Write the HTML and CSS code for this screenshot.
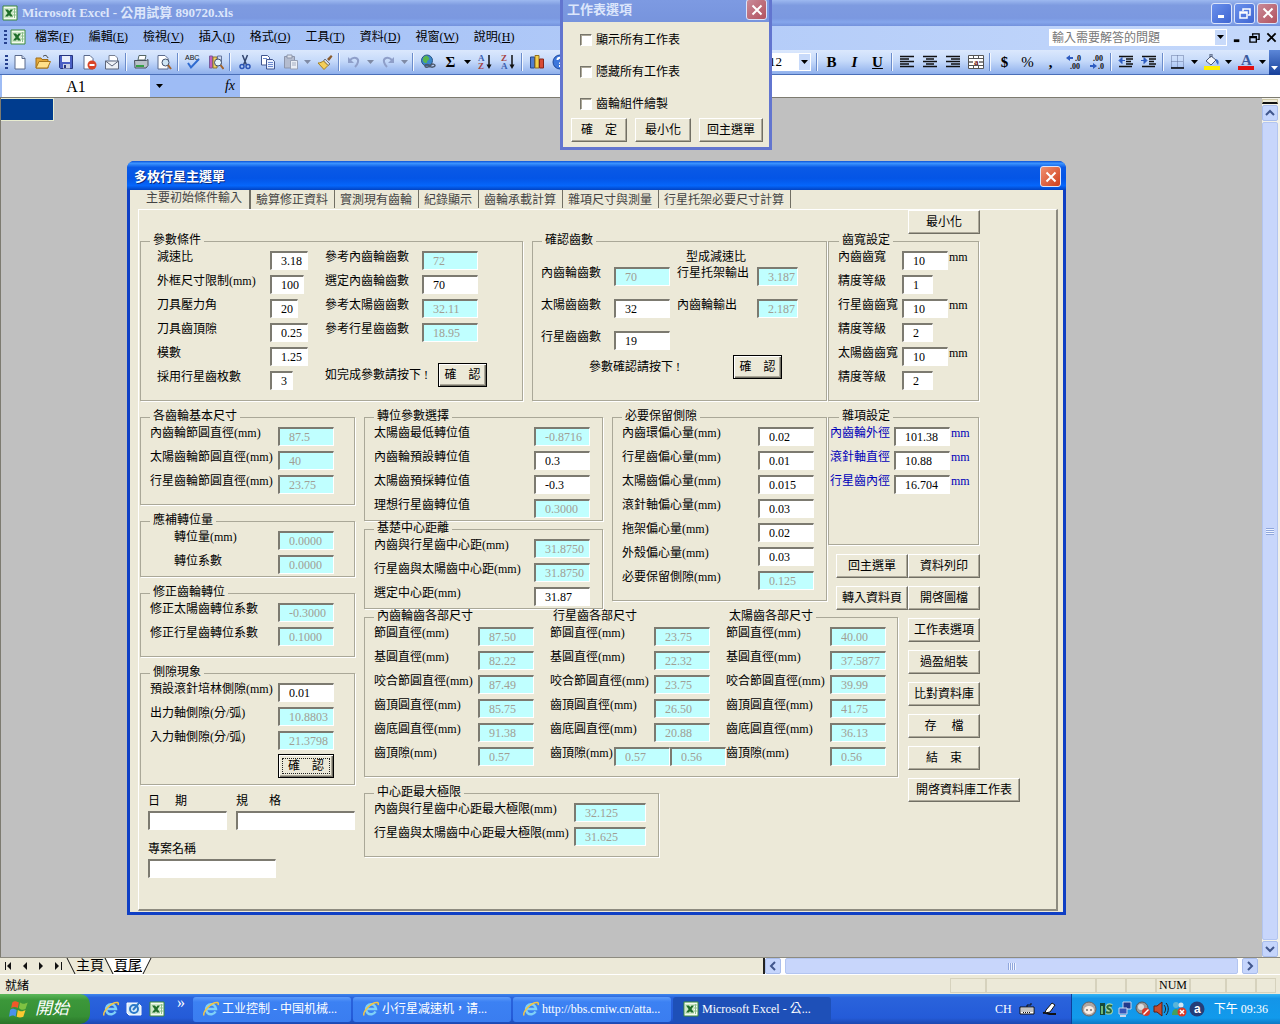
FILE: index.html
```html
<!DOCTYPE html>
<html lang="zh-Hant">
<head>
<meta charset="utf-8">
<title>Microsoft Excel - 公用試算 890720.xls</title>
<link rel="stylesheet" href="styles.css">
</head>
<body>
<svg class="defs" aria-hidden="true">
  <symbol id="dd" viewBox="0 0 7 4"><path d="M0 0h7L3.500 4z" fill="currentColor"/></symbol>
  <symbol id="excel" viewBox="0 0 16 16"><path d="M1 1h14v14H1z" fill="#f4fbf0" stroke="#3c8a3c"/><path d="M10 4h5M10 7h5M10 10h5M12.500 3v10" stroke="#8cc08c"/><path d="M2 3h9v10H2z" fill="#cfe8c8"/><path d="M3 4.500h3l5 7H8zM8.500 4.500H11l-5 7H3z" fill="#1f6e2a"/></symbol>
  <symbol id="page" viewBox="0 0 16 16"><path d="M3 1.500h7l3 3V15H3z" fill="#fff" stroke="#5b6a8c"/><path d="M10 1.500v3h3" fill="#cdd9ee" stroke="#5b6a8c"/></symbol>
  <symbol id="open" viewBox="0 0 16 16"><path d="M1 4h5l1 1.500h6V14H1z" fill="#e5a93a" stroke="#a06c14"/><path d="M1 14l3-6.500h11.500L12.500 14z" fill="#ffe08a" stroke="#a8761c"/><path d="M8 2.500c2-2 4-1 5 1.500" fill="none" stroke="#333"/></symbol>
  <symbol id="save" viewBox="0 0 16 16"><path d="M1.500 1.500h13v13h-12l-1-1z" fill="#4a5fc4" stroke="#26357f"/><path d="M4 2h8v6H4z" fill="#e8eefb"/><path d="M5 10h7v4.500H5z" fill="#c8d0e4"/><path d="M6 11h2v3H6z" fill="#26357f"/></symbol>
  <symbol id="perm" viewBox="0 0 16 16"><path d="M3 1.500h6l3 3V15H3z" fill="#fff" stroke="#5b6a8c"/><circle cx="11" cy="11" r="4.500" fill="#d84428"/><path d="M8.500 11h5" stroke="#fff" stroke-width="2"/></symbol>
  <symbol id="mail" viewBox="0 0 16 16"><path d="M5 6V1.500h6l2.500 2.500v3" fill="#fff" stroke="#777f92"/><path d="M1.500 7h13v8h-13z" fill="#eef1f7" stroke="#5d667c"/><path d="M1.500 7l6.500 5 6.500-5" fill="none" stroke="#5d667c"/></symbol>
  <symbol id="print" viewBox="0 0 16 16"><path d="M5 6l1-4.500h7L12 6z" fill="#fff" stroke="#566"/><path d="M1.500 6.500h12l1.500-1v6l-2 2.500h-11z" fill="#b9c1c9" stroke="#49525e"/><path d="M3 11h8v2H3z" fill="#35a045"/></symbol>
  <symbol id="preview" viewBox="0 0 16 16"><path d="M2 1.500h7l3 3V15H2z" fill="#fff" stroke="#5b6a8c"/><circle cx="9.500" cy="8.500" r="3.500" fill="#cfe6f5" stroke="#41506c"/><path d="M12 11l3 4" stroke="#a3632a" stroke-width="2"/></symbol>
  <symbol id="research" viewBox="0 0 16 16"><path d="M1.500 2h3v12h-3z" fill="#c25fbb" stroke="#7a5b9c"/><path d="M5 3h4v11H5z" fill="#f0cf62" stroke="#8d7630"/><path d="M9.500 2h4v8h-4z" fill="#cdd9ee" stroke="#64759e"/><circle cx="10" cy="8.500" r="3.500" fill="#e2f2fa" stroke="#41506c"/><path d="M12.500 11l3 4" stroke="#a3632a" stroke-width="2"/></symbol>
  <symbol id="cut" viewBox="0 0 16 16"><path d="M5.500 1l4 10M10.500 1l-4 10" stroke="#32456e" stroke-width="1.500"/><circle cx="5" cy="12.500" r="2" fill="none" stroke="#2c55b5" stroke-width="1.500"/><circle cx="11" cy="12.500" r="2" fill="none" stroke="#2c55b5" stroke-width="1.500"/></symbol>
  <symbol id="copy" viewBox="0 0 16 16"><path d="M1.500 1.500h6l2 2V11h-8z" fill="#fff" stroke="#41568f"/><path d="M6.500 5.500h6l2 2V15h-8z" fill="#e8f0ff" stroke="#41568f"/><path d="M8 8.500h5M8 10.500h5M8 12.500h5M3 4.500h4" stroke="#6c8ad0"/></symbol>
  <symbol id="paste" viewBox="0 0 16 16"><path d="M1.500 2.500h10V14h-10z" fill="#b4bccf" stroke="#8c95ab"/><path d="M4 1h5v3H4z" fill="#dfe4ee" stroke="#8c95ab"/><path d="M7.500 6.500h7V15h-7z" fill="#e9edf5" stroke="#97a0b5"/><path d="M9 9h4M9 11h4" stroke="#a5aec2"/></symbol>
  <symbol id="painter" viewBox="0 0 16 16"><path d="M10 5l4-4 1.500 1.500L12 7z" fill="#8a5b2c"/><path d="M8 5l5 5-2 1.500L6.500 7z" fill="#d5dae4" stroke="#6a7183"/><path d="M6.500 7l4.500 4.500L7 15.500 1 9c2 0 4-1 5.500-2z" fill="#f3cf5a" stroke="#a58120"/></symbol>
  <symbol id="undo" viewBox="0 0 16 16"><path d="M4 6c4-4 9-2 8 2-.500 2-2 4-3 5" fill="none" stroke="#8f9fc9" stroke-width="2"/><path d="M2 3v6h6z" fill="#8f9fc9"/></symbol>
  <symbol id="redo" viewBox="0 0 16 16"><path d="M12 6C8 2 3 4 4 8c.500 2 2 4 3 5" fill="none" stroke="#8f9fc9" stroke-width="2"/><path d="M14 3v6H8z" fill="#8f9fc9"/></symbol>
  <symbol id="globe" viewBox="0 0 16 16"><circle cx="7" cy="6.500" r="5.500" fill="#3b86c9" stroke="#2b5688"/><path d="M3 4c3-4 5-2 6 0s-2 2-2 4-3 1-4-1z" fill="#59b64e"/><path d="M5 12c0-2 4-2 5 0s5 1 5-.500-3-2-4-.500-6 4-6 .500z" fill="none" stroke="#4c596e" stroke-width="1.500"/></symbol>
  <symbol id="chart" viewBox="0 0 16 16"><path d="M1.500 3h4v11h-4z" fill="#4f7cd0" stroke="#24468c"/><path d="M6 1.500h4V14H6z" fill="#f4cf4b" stroke="#94701c"/><path d="M10.500 5h4v9h-4z" fill="#d84a34" stroke="#86261a"/></symbol>
  <symbol id="help" viewBox="0 0 16 16"><circle cx="8" cy="8" r="7" fill="#3d77dc" stroke="#1d489c"/><path d="M5.500 6c0-3 5-3 5 0 0 2-2.500 1.500-2.500 4M8 11v2" fill="none" stroke="#fff" stroke-width="2"/></symbol>
  <symbol id="al" viewBox="0 0 16 16"><path d="M1 2.500h14M1 5h9M1 7.500h14M1 10h9M1 12.500h14" stroke="#111" stroke-width="1.500"/></symbol>
  <symbol id="ac" viewBox="0 0 16 16"><path d="M1 2.500h14M4 5h8M1 7.500h14M4 10h8M1 12.500h14" stroke="#111" stroke-width="1.500"/></symbol>
  <symbol id="ar" viewBox="0 0 16 16"><path d="M1 2.500h14M6 5h9M1 7.500h14M6 10h9M1 12.500h14" stroke="#111" stroke-width="1.500"/></symbol>
  <symbol id="outd" viewBox="0 0 16 16"><path d="M1 2.500h14M8 5h7M8 7.500h5M8 10h7M1 12.500h13" stroke="#111" stroke-width="1.500"/><path d="M7 6.500H4M4 3.500v6L1 6.500z" fill="#2d5bc0" stroke="#2d5bc0"/></symbol>
  <symbol id="ind" viewBox="0 0 16 16"><path d="M1 2.500h14M8 5h7M8 7.500h5M8 10h7M1 12.500h13" stroke="#111" stroke-width="1.500"/><path d="M0 6.500h3M3 3.500v6l3-3z" fill="#2d5bc0" stroke="#2d5bc0"/></symbol>
  <symbol id="border" viewBox="0 0 16 16"><path d="M1.500 1.500h12v12h-12zM7.500 1.500v12M1.500 7.500h12" fill="none" stroke="#64759e" stroke-dasharray="1 1"/><path d="M1 14h13" stroke="#000" stroke-width="1.500"/></symbol>
  <symbol id="fill" viewBox="0 0 16 16"><path d="M2 7l5-5 5 4-5 5z" fill="#f3f6fb" stroke="#4c5a78"/><path d="M6 4V0h2v3" fill="none" stroke="#4c5a78"/><path d="M12 5c3 1 3 3 2 6l-2-3z" fill="#3d6cc4"/><path d="M0 12h16v4H0z" fill="#ffef00"/></symbol>
  <symbol id="x" viewBox="0 0 12 12"><path d="M1.500 1.500l9 9M10.500 1.500l-9 9" stroke="currentColor" stroke-width="2"/></symbol>
  <symbol id="min" viewBox="0 0 12 12"><path d="M2 8h6v3H2z" fill="currentColor"/></symbol>
  <symbol id="rest" viewBox="0 0 12 12"><path d="M4 4V2h7v6H9" fill="none" stroke="currentColor" stroke-width="1.500"/><path d="M1 5h7v6H1zM1 6h7" fill="none" stroke="currentColor" stroke-width="1.500"/></symbol>
  <symbol id="up" viewBox="0 0 10 10"><path d="M1 7l4-4 4 4" fill="none" stroke="#40568c" stroke-width="2"/></symbol>
  <symbol id="down" viewBox="0 0 10 10"><path d="M1 3l4 4 4-4" fill="none" stroke="#40568c" stroke-width="2"/></symbol>
  <symbol id="left" viewBox="0 0 10 10"><path d="M7 1L3 5l4 4" fill="none" stroke="#40568c" stroke-width="2"/></symbol>
  <symbol id="right" viewBox="0 0 10 10"><path d="M3 1l4 4-4 4" fill="none" stroke="#40568c" stroke-width="2"/></symbol>
  <symbol id="ie" viewBox="0 0 16 16"><path d="M12.500 10.500A5 5 0 1 1 13 8H4" fill="none" stroke="#7fd0f8" stroke-width="2.500"/><path d="M1 14.500C-.500 11 8 1 14.500 1.500c1 .500 1 1.500.500 2.500" fill="none" stroke="#f5c542" stroke-width="1.500"/></symbol>
  <symbol id="desk" viewBox="0 0 16 16"><path d="M1 2h11l3 3v9H3L1 12z" fill="#d8ecfa" stroke="#fff"/><circle cx="8" cy="8" r="4" fill="none" stroke="#2b78c8" stroke-width="2"/><path d="M7 9l6-7" stroke="#2b78c8" stroke-width="2"/></symbol>
  <symbol id="flag" viewBox="0 0 20 18"><path d="M3 3c2-2 4-1 6 0L8 8C6 7 4 7 2 8z" fill="#f0582a"/><path d="M10 3c3 2 5 1 7 0l-2 6c-2 1-4 1-6-1z" fill="#7fc242"/><path d="M1 10c2-2 4-1 6 0l-1 6c-2-2-4-1-6 0z" fill="#4a92ec"/><path d="M8 10c3 2 5 1 7 0l-2 6c-2 1-4 1-6 0z" fill="#fbc932"/></symbol>
</svg>

<div class="desktop">
  <header class="titlebar">
    <svg class="ico"><use href="#excel"/></svg>
    <h1>Microsoft Excel - 公用試算 890720.xls</h1>
    <div class="caption-buttons">
      <button class="cap" aria-label="最小化"><svg><use href="#min"/></svg></button>
      <button class="cap" aria-label="還原"><svg><use href="#rest"/></svg></button>
      <button class="cap cap-close" aria-label="關閉"><svg><use href="#x"/></svg></button>
    </div>
  </header>

  <nav class="menubar">
    <span class="grip"></span>
    <svg class="ico"><use href="#excel"/></svg>
    <button>檔案(<u>F</u>)</button><button>編輯(<u>E</u>)</button><button>檢視(<u>V</u>)</button><button>插入(<u>I</u>)</button><button>格式(<u>O</u>)</button><button>工具(<u>T</u>)</button><button>資料(<u>D</u>)</button><button>視窗(<u>W</u>)</button><button>說明(<u>H</u>)</button>
    <div class="ask">
      <input type="text" aria-label="輸入需要解答的問題" value="輸入需要解答的問題">
      <span class="drop"><svg><use href="#dd"/></svg></span>
    </div>
    <div class="doc-buttons">
      <button aria-label="最小化視窗"><svg><use href="#min"/></svg></button>
      <button aria-label="還原視窗"><svg><use href="#rest"/></svg></button>
      <button aria-label="關閉視窗"><svg><use href="#x"/></svg></button>
    </div>
  </nav>

  <div class="toolbar">
    <span class="grip"></span>
    <button aria-label="開新檔案"><svg><use href="#page"/></svg></button>
    <button aria-label="開啟"><svg><use href="#open"/></svg></button>
    <button aria-label="儲存"><svg><use href="#save"/></svg></button>
    <button aria-label="權限"><svg><use href="#perm"/></svg></button>
    <button aria-label="郵件"><svg><use href="#mail"/></svg></button>
    <i class="sep"></i>
    <button aria-label="列印"><svg><use href="#print"/></svg></button>
    <button aria-label="預覽列印"><svg><use href="#preview"/></svg></button>
    <i class="sep"></i>
    <button aria-label="拼字檢查"><svg viewBox="0 0 16 16"><text x="0" y="6" font-size="7" font-family="Liberation Sans" fill="#111">ABC</text><path d="M3 9l3 4.500L14 5" fill="none" stroke="#2f6bd0" stroke-width="2"/></svg></button>
    <button aria-label="參考資料"><svg><use href="#research"/></svg></button>
    <i class="sep"></i>
    <button aria-label="剪下"><svg><use href="#cut"/></svg></button>
    <button aria-label="複製"><svg><use href="#copy"/></svg></button>
    <button aria-label="貼上"><svg><use href="#paste"/></svg></button>
    <button class="arrow dim" aria-label="貼上選項"><svg><use href="#dd"/></svg></button>
    <button aria-label="複製格式"><svg><use href="#painter"/></svg></button>
    <i class="sep"></i>
    <button aria-label="復原"><svg><use href="#undo"/></svg></button>
    <button class="arrow dim" aria-label="復原清單"><svg><use href="#dd"/></svg></button>
    <button aria-label="取消復原"><svg><use href="#redo"/></svg></button>
    <button class="arrow dim" aria-label="取消復原清單"><svg><use href="#dd"/></svg></button>
    <i class="sep"></i>
    <button aria-label="超連結"><svg><use href="#globe"/></svg></button>
    <button class="glyph">Σ</button>
    <button class="arrow" aria-label="加總選項"><svg><use href="#dd"/></svg></button>
    <button aria-label="遞增排序"><svg viewBox="0 0 16 16"><text x="1" y="7" font-size="9" font-weight="bold" font-family="Liberation Serif" fill="#3b5fae">A</text><text x="1" y="15" font-size="9" font-weight="bold" font-family="Liberation Serif" fill="#a54242">Z</text><path d="M12 1v11" stroke="#111" stroke-width="1.500"/><path d="M9.500 10.500h5L12 15z" fill="#111"/></svg></button>
    <button aria-label="遞減排序"><svg viewBox="0 0 16 16"><text x="1" y="7" font-size="9" font-weight="bold" font-family="Liberation Serif" fill="#a54242">Z</text><text x="1" y="15" font-size="9" font-weight="bold" font-family="Liberation Serif" fill="#3b5fae">A</text><path d="M12 1v11" stroke="#111" stroke-width="1.500"/><path d="M9.500 10.500h5L12 15z" fill="#111"/></svg></button>
    <i class="sep"></i>
    <button aria-label="圖表精靈"><svg><use href="#chart"/></svg></button>
    <button aria-label="說明"><svg><use href="#help"/></svg></button>

    <div class="size">
      <select aria-label="字型大小"><option>12</option></select>
      <span class="drop"><svg><use href="#dd"/></svg></span>
    </div>
    <i class="sep"></i>
    <button class="glyph">B</button>
    <button class="glyph italic">I</button>
    <button class="glyph under">U</button>
    <i class="sep"></i>
    <button aria-label="靠左"><svg><use href="#al"/></svg></button>
    <button aria-label="置中"><svg><use href="#ac"/></svg></button>
    <button aria-label="靠右"><svg><use href="#ar"/></svg></button>
    <button aria-label="跨欄置中"><svg viewBox="0 0 16 16"><path d="M.500 1.500h15v13H.500zM5.500 1.500v3M10.500 1.500v3M5.500 11.500v3M10.500 11.500v3M.500 4.500h15M.500 11.500h15" fill="#fff" stroke="#555"/><text x="6" y="10.500" font-size="9" font-weight="bold" font-family="Liberation Serif" fill="#701818">a</text><path d="M1 8h4M11 8h4" stroke="#111"/></svg></button>
    <i class="sep"></i>
    <button class="glyph">$</button>
    <button class="glyph light">%</button>
    <button class="glyph">,</button>
    <button aria-label="增加小數位數"><svg viewBox="0 0 16 16"><text x="9" y="7" font-size="8" font-weight="bold" font-family="Liberation Serif" fill="#111">.0</text><text x="4" y="15" font-size="8" font-weight="bold" font-family="Liberation Serif" fill="#111">.00</text><path d="M7 4H2" stroke="#2d5bc0" stroke-width="2"/><path d="M4 1v6L0 4z" fill="#2d5bc0"/></svg></button>
    <button aria-label="減少小數位數"><svg viewBox="0 0 16 16"><text x="4" y="7" font-size="8" font-weight="bold" font-family="Liberation Serif" fill="#111">.00</text><text x="9" y="15" font-size="8" font-weight="bold" font-family="Liberation Serif" fill="#111">.0</text><path d="M1 12h4" stroke="#2d5bc0" stroke-width="2"/><path d="M4 9v6l4-3z" fill="#2d5bc0"/></svg></button>
    <i class="sep"></i>
    <button aria-label="減少縮排"><svg><use href="#outd"/></svg></button>
    <button aria-label="增加縮排"><svg><use href="#ind"/></svg></button>
    <i class="sep"></i>
    <button aria-label="框線"><svg><use href="#border"/></svg></button>
    <button class="arrow" aria-label="框線選項"><svg><use href="#dd"/></svg></button>
    <button aria-label="填滿色彩"><svg><use href="#fill"/></svg></button>
    <button class="arrow" aria-label="填滿選項"><svg><use href="#dd"/></svg></button>
    <button aria-label="字型色彩"><svg viewBox="0 0 16 16"><text x="3" y="11" font-size="15" font-weight="bold" font-family="Liberation Serif" fill="#3b5a9c">A</text><path d="M0 12h16v4H0z" fill="#e01010"/></svg></button>
    <button class="arrow" aria-label="字型色彩選項"><svg><use href="#dd"/></svg></button>
    <button class="endcap" aria-label="工具列選項"><svg><use href="#dd"/></svg></button>
  </div>

  <div class="formula">
    <input class="namebox" type="text" aria-label="名稱方塊" value="A1">
    <button class="name-arrow" aria-label="名稱清單"><svg><use href="#dd"/></svg></button>
    <button class="fx">fx</button>
    <input class="fbox" type="text" aria-label="資料編輯列">
  </div>

  <main class="workspace">
    <div class="cell"></div>
    <div class="vscroll">
      <i class="split"></i>
      <button aria-label="向上捲動"><svg><use href="#up"/></svg></button>
      <div class="thumb"><i></i></div>
      <button aria-label="向下捲動"><svg><use href="#down"/></svg></button>
    </div>
  </main>

  <div class="sheets">
    <svg class="navs" viewBox="0 0 66 16"><path d="M5.500 4v8M61.500 4v8" stroke="#111"/><path d="M11 4v8L7 8zM27 4v8l-4-4zM39 4v8l4-4zM55 4v8l4-4z" fill="#111"/></svg>
    <svg class="slash" viewBox="0 0 10 16"><path d="M1 0l8 16" stroke="#111"/></svg>
    <a href="#">主頁</a>
    <svg class="slash on" viewBox="0 0 10 16"><path d="M2 0h8v16z" fill="#fff"/><path d="M1 0l8 16" stroke="#111"/></svg>
    <a href="#" class="current">頁尾</a>
    <svg class="slash" viewBox="0 0 10 16"><path d="M0 0h9L1 16H0z" fill="#fff"/><path d="M9 0L1 16" stroke="#111"/></svg>
    <div class="hscroll">
      <button aria-label="向左捲動"><svg><use href="#left"/></svg></button>
      <div class="thumb"><i></i></div>
      <button aria-label="向右捲動"><svg><use href="#right"/></svg></button>
    </div>
  </div>

  <div class="status">
    <span class="ready">就緒</span>
    <span class="st w36"></span><span class="st w110"></span><span class="st w30"></span><span class="st w30"></span><span class="st num">NUM</span><span class="st w36"></span><span class="st w30"></span><span class="st w20"></span>
  </div>

  <footer class="taskbar">
    <button class="start"><svg><use href="#flag"/></svg>開始</button>
    <div class="quick">
      <svg><use href="#ie"/></svg><svg><use href="#desk"/></svg><svg><use href="#excel"/></svg><span>»</span>
    </div>
    <button class="task"><svg><use href="#ie"/></svg><span>工业控制 - 中国机械...</span></button>
    <button class="task"><svg><use href="#ie"/></svg><span>小行星减速机，请...</span></button>
    <button class="task"><svg><use href="#ie"/></svg><span>http://bbs.cmiw.cn/atta...</span></button>
    <button class="task active"><svg><use href="#excel"/></svg><span>Microsoft Excel - 公...</span></button>
    <div class="lang">
      <span>CH</span>
      <svg viewBox="0 0 16 16"><path d="M1 6h14v7H1z" fill="#fff" stroke="#111"/><path d="M2.500 8h11M2.500 10h11M4 11.500h8" stroke="#111" stroke-dasharray="1 1"/><path d="M8 6V4h4V2" fill="none" stroke="#111"/></svg>
      <svg viewBox="0 0 16 16"><path d="M1 12c4-1 4 1 7 1h6" fill="none" stroke="#111" stroke-width="2"/><path d="M4 9l6-7 3 2-5 7-5 1z" fill="#fff" stroke="#111"/></svg>
    </div>
    <div class="tray">
      <svg viewBox="0 0 16 16"><circle cx="8" cy="8" r="7" fill="#b0a8a4" stroke="#6b6260"/><ellipse cx="8" cy="9" rx="5" ry="4" fill="#fbeee6"/><path d="M5 9h2M9 9h2" stroke="#333"/></svg>
      <svg viewBox="0 0 16 16"><path d="M1 2h5v12H1z" fill="#174a3a"/><path d="M3 5v8" stroke="#8ee08a" stroke-width="1.500"/><path d="M13 5c-5-2-6 2-3 3s3 5-3 3" fill="none" stroke="#a9d8a4" stroke-width="4"/><path d="M13 5c-5-2-6 2-3 3s3 5-3 3" fill="none" stroke="#2c6a3c" stroke-width="2"/></svg>
      <svg viewBox="0 0 16 16"><path d="M6 1h8v7H6z" fill="#203a8c" stroke="#c9d6ec"/><path d="M2 7h8v6H2z" fill="#3456b8" stroke="#c9d6ec"/><path d="M3 15h6" stroke="#c9d6ec" stroke-width="2"/></svg>
      <svg viewBox="0 0 16 16"><circle cx="7" cy="7" r="6" fill="#9a9a9a" stroke="#555"/><circle cx="6" cy="6" r="3" fill="#ddd"/><circle cx="11" cy="11" r="4" fill="#d83a2a"/><path d="M8.500 13.500l5-5" stroke="#fff" stroke-width="1.500"/></svg>
      <svg viewBox="0 0 16 16"><path d="M1 5h3l5-4v14l-5-4H1z" fill="#c64c30" stroke="#5e1e12"/><path d="M11 4c2 2 2 6 0 8M13 2c3 3 3 9 0 12" fill="none" stroke="#222"/></svg>
      <svg viewBox="0 0 16 16"><circle cx="5" cy="4" r="3" fill="#5bb5d8"/><path d="M1 14c0-8 8-8 8 0z" fill="#43a05b"/><circle cx="10" cy="4" r="2.500" fill="#cfe6f4"/><circle cx="11" cy="11" r="4.500" fill="#d83a2a"/><path d="M9 9l4 4M13 9l-4 4" stroke="#fff" stroke-width="1.500"/></svg>
      <svg viewBox="0 0 16 16"><circle cx="8" cy="8" r="7.500" fill="#243e78"/><text x="5" y="12" font-size="12" font-weight="bold" font-family="Liberation Sans" fill="#fff">a</text></svg>
      <span>下午 09:36</span>
    </div>
  </footer>

  <section class="window options" aria-label="工作表選項">
    <div class="win-title"><h2>工作表選項</h2><button class="cap cap-close" aria-label="關閉"><svg><use href="#x"/></svg></button></div>
    <form class="options-body">
      <label><input type="checkbox">顯示所有工作表</label>
      <label><input type="checkbox">隱藏所有工作表</label>
      <label><input type="checkbox">齒輪組件繪製</label>
      <div class="options-actions">
        <button type="button" class="btn">確　定</button><button type="button" class="btn">最小化</button><button type="button" class="btn">回主選單</button>
      </div>
    </form>
  </section>

  <section class="window planet" aria-label="多枚行星主選單">
    <div class="win-title"><h2>多枚行星主選單</h2><button class="cap cap-close" aria-label="關閉"><svg><use href="#x"/></svg></button></div>
    <div class="planet-body">
      <div class="tabs" role="tablist">
        <button role="tab" aria-selected="true">主要初始條件輸入</button><button role="tab">驗算修正資料</button><button role="tab">實測現有齒輪</button><button role="tab">紀錄顯示</button><button role="tab">齒輪承載計算</button><button role="tab">雜項尺寸與測量</button><button role="tab">行星托架必要尺寸計算</button>
      </div>
      <form class="panel">
        <div class="sheet">
          <button type="button" class="btn w72 minimize">最小化</button>

          <div class="top">
            <fieldset class="params">
              <legend>參數條件</legend>
              <div class="fields l113">
                <label><span>減速比</span><input class="i37" type="text" value="3.18"></label>
                <label><span>外框尺寸限制(mm)</span><input class="i34" type="text" value="100"></label>
                <label><span>刀具壓力角</span><input class="i28" type="text" value="20"></label>
                <label><span>刀具齒頂隙</span><input class="i37" type="text" value="0.25"></label>
                <label><span>模數</span><input class="i37" type="text" value="1.25"></label>
                <label><span>採用行星齒枚數</span><input class="i22" type="text" value="3"></label>
              </div>
              <div class="fields l97">
                <label><span>參考內齒輪齒數</span><input type="text" value="72" disabled></label>
                <label><span>選定內齒輪齒數</span><input type="text" value="70"></label>
                <label><span>參考太陽齒齒數</span><input type="text" value="32.11" disabled></label>
                <label><span>參考行星齒齒數</span><input type="text" value="18.95" disabled></label>
                <div class="confirm"><span>如完成參數請按下 !</span><button type="button" class="btn default">確　認</button></div>
              </div>
            </fieldset>

            <fieldset class="teeth">
              <legend>確認齒數</legend>
              <div class="teeth-cols">
                <div class="fields tall l73">
                  <label><span>內齒輪齒數</span><input type="text" value="70" disabled></label>
                  <label><span>太陽齒齒數</span><input type="text" value="32"></label>
                  <label><span>行星齒齒數</span><input type="text" value="19"></label>
                </div>
                <div class="ratio">
                  <span class="ratio-head">型成減速比</span>
                  <div class="fields tall l80">
                    <label><span>行星托架輸出</span><input class="i40" type="text" value="3.187" disabled></label>
                    <label><span>內齒輪輸出</span><input class="i40" type="text" value="2.187" disabled></label>
                  </div>
                </div>
              </div>
              <div class="confirm teeth-confirm"><span>參數確認請按下 !</span><button type="button" class="btn default">確　認</button></div>
            </fieldset>

            <fieldset class="width-set">
              <legend>齒寬設定</legend>
              <div class="fields l64">
                <label><span>內齒齒寬</span><input class="i46" type="text" value="10"><em>mm</em></label>
                <label><span>精度等級</span><input class="i31" type="text" value="1"></label>
                <label><span>行星齒齒寬</span><input class="i46" type="text" value="10"><em>mm</em></label>
                <label><span>精度等級</span><input class="i31" type="text" value="2"></label>
                <label><span>太陽齒齒寬</span><input class="i46" type="text" value="10"><em>mm</em></label>
                <label><span>精度等級</span><input class="i31" type="text" value="2"></label>
              </div>
            </fieldset>
          </div>

          <div class="lower">
            <div class="left">
              <fieldset>
                <legend>各齒輪基本尺寸</legend>
                <div class="fields l128">
                  <label><span>內齒輪節圓直徑(mm)</span><input type="text" value="87.5" disabled></label>
                  <label><span>太陽齒輪節圓直徑(mm)</span><input type="text" value="40" disabled></label>
                  <label><span>行星齒輪節圓直徑(mm)</span><input type="text" value="23.75" disabled></label>
                </div>
              </fieldset>
              <fieldset class="snug">
                <legend>應補轉位量</legend>
                <div class="fields l128 indent">
                  <label><span>轉位量(mm)</span><input type="text" value="0.0000" disabled></label>
                  <label><span>轉位系數</span><input type="text" value="0.0000" disabled></label>
                </div>
              </fieldset>
              <fieldset>
                <legend>修正齒輪轉位</legend>
                <div class="fields l128">
                  <label><span>修正太陽齒轉位系數</span><input type="text" value="-0.3000" disabled></label>
                  <label><span>修正行星齒轉位系數</span><input type="text" value="0.1000" disabled></label>
                </div>
              </fieldset>
              <fieldset class="play">
                <legend>側隙現象</legend>
                <div class="fields l128">
                  <label><span>預設滾針培林側隙(mm)</span><input type="text" value="0.01"></label>
                  <label><span>出力軸側隙(分/弧)</span><input type="text" value="10.8803" disabled></label>
                  <label><span>入力軸側隙(分/弧)</span><input type="text" value="21.3798" disabled></label>
                </div>
                <button type="button" class="btn default focused">確　認</button>
              </fieldset>
              <div class="notes">
                <label class="date"><span>日     期</span><input type="text"></label>
                <label class="spec"><span>規       格</span><input type="text"></label>
                <label class="project"><span>專案名稱</span><input type="text"></label>
              </div>
            </div>

            <div class="right">
              <div class="mid">
                <div class="shift">
                  <fieldset class="snug">
                    <legend>轉位參數選擇</legend>
                    <div class="fields l160">
                      <label><span>太陽齒最低轉位值</span><input type="text" value="-0.8716" disabled></label>
                      <label><span>內齒輪預設轉位值</span><input type="text" value="0.3"></label>
                      <label><span>太陽齒預採轉位值</span><input type="text" value="-0.3"></label>
                      <label><span>理想行星齒轉位值</span><input type="text" value="0.3000" disabled></label>
                    </div>
                  </fieldset>
                  <fieldset class="snug">
                    <legend>基楚中心距離</legend>
                    <div class="fields l160">
                      <label><span>內齒與行星齒中心距(mm)</span><input type="text" value="31.8750" disabled></label>
                      <label><span>行星齒與太陽齒中心距(mm)</span><input type="text" value="31.8750" disabled></label>
                      <label><span>選定中心距(mm)</span><input type="text" value="31.87"></label>
                    </div>
                  </fieldset>
                </div>
                <fieldset class="keep">
                  <legend>必要保留側隙</legend>
                  <div class="fields l136">
                    <label><span>內齒環偏心量(mm)</span><input type="text" value="0.02"></label>
                    <label><span>行星齒偏心量(mm)</span><input type="text" value="0.01"></label>
                    <label><span>太陽齒偏心量(mm)</span><input type="text" value="0.015"></label>
                    <label><span>滾針軸偏心量(mm)</span><input type="text" value="0.03"></label>
                    <label><span>拖架偏心量(mm)</span><input type="text" value="0.02"></label>
                    <label><span>外殼偏心量(mm)</span><input type="text" value="0.03"></label>
                    <label><span>必要保留側隙(mm)</span><input type="text" value="0.125" disabled></label>
                  </div>
                </fieldset>
                <div class="misc-col">
                  <fieldset class="misc">
                    <legend>雜項設定</legend>
                    <div class="fields l64">
                      <label><span>內齒輪外徑</span><input type="text" value="101.38"><em>mm</em></label>
                      <label><span>滾針軸直徑</span><input type="text" value="10.88"><em>mm</em></label>
                      <label><span>行星齒內徑</span><input type="text" value="16.704"><em>mm</em></label>
                    </div>
                  </fieldset>
                  <div class="pairs">
                    <button type="button" class="btn">回主選單</button><button type="button" class="btn">資料列印</button>
                    <button type="button" class="btn">轉入資料頁</button><button type="button" class="btn">開啓圖檔</button>
                  </div>
                </div>
              </div>

              <div class="bottom">
                <div class="dims">
                  <fieldset>
                    <legend class="triple"><span>內齒輪齒各部尺寸</span><span>行星齒各部尺寸</span><span>太陽齒各部尺寸</span></legend>
                    <div class="dim-cols">
                      <div class="fields l104">
                        <label><span>節圓直徑(mm)</span><input type="text" value="87.50" disabled></label>
                        <label><span>基圓直徑(mm)</span><input type="text" value="82.22" disabled></label>
                        <label><span>咬合節圓直徑(mm)</span><input type="text" value="87.49" disabled></label>
                        <label><span>齒頂圓直徑(mm)</span><input type="text" value="85.75" disabled></label>
                        <label><span>齒底圓直徑(mm)</span><input type="text" value="91.38" disabled></label>
                        <label><span>齒頂隙(mm)</span><input type="text" value="0.57" disabled></label>
                      </div>
                      <div class="fields l104">
                        <label><span>節圓直徑(mm)</span><input type="text" value="23.75" disabled></label>
                        <label><span>基圓直徑(mm)</span><input type="text" value="22.32" disabled></label>
                        <label><span>咬合節圓直徑(mm)</span><input type="text" value="23.75" disabled></label>
                        <label><span>齒頂圓直徑(mm)</span><input type="text" value="26.50" disabled></label>
                        <label><span>齒底圓直徑(mm)</span><input type="text" value="20.88" disabled></label>
                        <div class="two"><label for="gap-a">齒頂隙(mm)</label><input id="gap-a" type="text" value="0.57" disabled><input type="text" aria-label="齒頂隙二" value="0.56" disabled></div>
                      </div>
                      <div class="fields l104">
                        <label><span>節圓直徑(mm)</span><input type="text" value="40.00" disabled></label>
                        <label><span>基圓直徑(mm)</span><input type="text" value="37.5877" disabled></label>
                        <label><span>咬合節圓直徑(mm)</span><input type="text" value="39.99" disabled></label>
                        <label><span>齒頂圓直徑(mm)</span><input type="text" value="41.75" disabled></label>
                        <label><span>齒底圓直徑(mm)</span><input type="text" value="36.13" disabled></label>
                        <label><span>齒頂隙(mm)</span><input type="text" value="0.56" disabled></label>
                      </div>
                    </div>
                  </fieldset>
                  <fieldset class="limit">
                    <legend>中心距最大極限</legend>
                    <div class="fields l200">
                      <label><span>內齒與行星齒中心距最大極限(mm)</span><input class="i71" type="text" value="32.125" disabled></label>
                      <label><span>行星齒與太陽齒中心距最大極限(mm)</span><input class="i71" type="text" value="31.625" disabled></label>
                    </div>
                  </fieldset>
                </div>
                <div class="actions">
                  <button type="button" class="btn w72">工作表選項</button>
                  <button type="button" class="btn w72">過盈組裝</button>
                  <button type="button" class="btn w72">比對資料庫</button>
                  <button type="button" class="btn w72">存     檔</button>
                  <button type="button" class="btn w72">結　束</button>
                  <button type="button" class="btn">開啓資料庫工作表</button>
                </div>
              </div>
            </div>
          </div>
        </div>
      </form>
    </div>
  </section>
</div>
</body>
</html>
```

FILE: styles.css
```css
* { box-sizing: border-box; }

body {
  margin: 0;
  font: 12px/14px "Liberation Serif", "Noto Sans CJK TC", serif;
  color: #000;
  background: #c0c0c0;
}

button, input, select { font: inherit; color: inherit; margin: 0; }
button { padding: 0; border: 0; background: none; white-space: pre; }
h1, h2 { margin: 0; font-size: 13px; line-height: 16px; color: #dce6fb; }
.defs { position: absolute; width: 0; height: 0; }
.ico { width: 16px; height: 16px; }

.desktop {
  position: relative;
  display: flex;
  flex-direction: column;
  min-height: 100vh;
}

/* Excel frame */
.titlebar {
  display: flex;
  align-items: center;
  gap: 4px;
  height: 26px;
  padding: 0 2px;
  background: linear-gradient(#9db9f0, #7e9be0 20%, #7b98e0 70%, #85a6ec 85%, #7391dc);
}
.caption-buttons { display: flex; gap: 2px; margin-left: auto; }
.cap {
  display: flex;
  align-items: center;
  justify-content: center;
  width: 21px;
  height: 21px;
  border: 1px solid #dbe4fa;
  border-radius: 3px;
  color: #fff;
  background: linear-gradient(135deg, #6a90ec, #3f66d2);
}
.cap svg { width: 12px; height: 12px; }
.cap-close { background: linear-gradient(135deg, #c98a98, #b2525e); }

.menubar {
  display: flex;
  align-items: center;
  height: 24px;
  padding: 0 0 2px 4px;
  background: linear-gradient(90deg, #9ebcf5, #c4d8fb);
}
.menubar > button { padding: 0 7px 0 8px; }
.menubar > .ico { margin: 0 1px 0 3px; }
.grip {
  flex: none;
  width: 3px;
  height: 14px;
  background: repeating-linear-gradient(#27418f 0 2px, transparent 2px 4px);
}
.ask, .size { position: relative; display: flex; margin-left: auto; }
.ask input {
  width: 178px;
  height: 17px;
  padding: 0 2px;
  border: 1px solid #fff;
  background: #fff;
  color: #777;
}
.drop {
  position: absolute;
  right: 1px;
  top: 1px;
  bottom: 1px;
  display: flex;
  align-items: center;
  justify-content: center;
  width: 11px;
  background: #c8dafa;
  pointer-events: none;
}
.drop svg, .arrow svg, .endcap svg, .name-arrow svg { width: 7px; height: 4px; }
.doc-buttons { display: flex; gap: 6px; padding: 0 3px 0 5px; }
.doc-buttons button { width: 11px; height: 11px; }
.doc-buttons svg { display: block; width: 11px; height: 11px; }

.toolbar {
  display: flex;
  align-items: center;
  height: 25px;
  border-bottom: 1px solid #4a6fb8;
  background: linear-gradient(#dbe8fd, #c6dafa 45%, #8fb0ec);
}
.toolbar .grip { margin: 0 0 0 5px; }
.toolbar button {
  flex: none;
  display: flex;
  align-items: center;
  justify-content: center;
  width: 23px;
  height: 22px;
}
.toolbar button svg { width: 16px; height: 16px; overflow: visible; }
.toolbar .arrow { width: 11px; }
.toolbar .arrow svg { width: 7px; height: 4px; }
.toolbar .dim { color: #7f8aa5; }
.toolbar .glyph { font-weight: bold; font-size: 15px; }
.toolbar .italic { font-style: italic; }
.toolbar .under { text-decoration: underline; }
.toolbar .light { font-weight: normal; }
.sep { flex: none; width: 6px; height: 18px; background: linear-gradient(90deg, transparent 2px, #6a8ccb 2px 3px, #f2f7ff 3px 4px, transparent 4px); }
.size select {
  appearance: none;
  width: 48px;
  height: 18px;
  padding: 0 0 0 5px;
  border: 1px solid #fff;
  border-radius: 0;
  background: #fff;
  font-size: 13px;
  line-height: 14px;
}
.size { margin-right: 3px; }
.toolbar .endcap { align-items: flex-end; width: 11px; height: 25px; padding-bottom: 5px; margin-left: 1px; color: #fff; background: linear-gradient(#5c87d8, #17409a); }
.toolbar .endcap svg { width: 7px; height: 4px; }

.formula {
  display: flex;
  height: 22px;
  padding-left: 2px;
  background: #9ebcf5;
}
.namebox { width: 148px; border: 0; padding: 2px 0 0; text-align: center; font-size: 16px; background: #fff; }
.name-arrow { display: flex; align-items: center; justify-content: center; width: 19px; }
.fx { width: 71px; padding: 0 5px; text-align: right; font-style: italic; font-size: 14px; }
.fbox { flex: 1; border: 0; background: #fff; }

.workspace {
  flex: 1;
  display: flex;
  justify-content: space-between;
  border-top: 1px solid #7d7b70;
  border-left: 1px solid #7d7b70;
  background: #c0c0c0;
}
.cell { width: 53px; height: 23px; border: 1px solid #e8ecd0; border-width: 1px 1px 1px 0; background: #003c8e; }
.vscroll { display: flex; flex-direction: column; gap: 1px; width: 18px; padding: 1px 2px 0 0; background: #f3f2e9; }
.vscroll button, .hscroll button {
  flex: none;
  display: flex;
  align-items: center;
  justify-content: center;
  width: 16px;
  height: 16px;
  border: 1px solid #a9bdec;
  border-radius: 2px;
  background: #c5d5fc;
}
.vscroll svg, .hscroll svg { width: 10px; height: 10px; }
.split { height: 5px; border: 1px solid #cfc9a8; border-bottom: 2px solid #111; background: #ece9d8; }
.thumb {
  flex: 1;
  display: flex;
  align-items: center;
  justify-content: center;
  border: 1px solid #b3c5f0;
  border-radius: 2px;
  background: #c8d6fb;
}
.vscroll .thumb i { width: 8px; height: 7px; background: repeating-linear-gradient(#8fa6dc 0 1px, #eef3ff 1px 2px); }
.hscroll .thumb i { width: 8px; height: 7px; background: repeating-linear-gradient(90deg, #8fa6dc 0 1px, #eef3ff 1px 2px); }

.sheets {
  display: flex;
  height: 17px;
  border-top: 1px solid #8d8b80;
  background: #ece9d8;
}
.navs { width: 66px; height: 16px; }
.slash { width: 10px; height: 16px; }
.sheets a { font-size: 14px; line-height: 16px; color: #000; text-decoration: none; }
.sheets .current { background: #fff; text-decoration: underline; }
.hscroll {
  flex: none;
  display: flex;
  gap: 4px;
  width: calc(40% + 5px);
  margin-left: auto;
  padding: 0 22px 0 0;
  border-left: 2px solid #222;
  background: linear-gradient(90deg, #fff calc(100% - 22px), #ece9d8 0);
}

.status {
  display: flex;
  align-items: center;
  height: 20px;
  padding: 2px 4px 0 5px;
  border-top: 1px solid #fff;
  background: #ece9d8;
}
.ready { margin-right: auto; }
.st { height: 15px; border: 1px solid #d6d2bd; }
.num { width: 34px; text-align: center; line-height: 13px; }
.w20 { width: 20px; }
.w30 { width: 30px; }
.w36 { width: 36px; }
.w110 { width: 110px; }

.taskbar {
  display: flex;
  align-items: center;
  gap: 2px;
  height: 30px;
  color: #fff;
  background: linear-gradient(#3f87ee, #2a63dc 12%, #245bd8 80%, #1c48b0);
}
.taskbar svg { flex: none; width: 16px; height: 16px; }
.start {
  display: flex;
  align-items: center;
  gap: 4px;
  width: 90px;
  height: 30px;
  padding-left: 9px;
  border-radius: 0 10px 10px 0;
  background: linear-gradient(#5cb85a, #3c983a 20%, #368f35 75%, #2a7329);
  font-size: 17px;
  line-height: 20px;
  font-style: italic;
}
.taskbar .start svg { width: 22px; height: 20px; }
.quick { display: flex; align-items: center; gap: 7px; width: 99px; padding-left: 11px; }
.quick span { margin: -12px 0 0 5px; font-size: 16px; }
.task {
  display: flex;
  align-items: center;
  gap: 3px;
  flex: 0 1 158px;
  min-width: 0;
  height: 25px;
  padding: 0 10px;
  border-radius: 3px;
  background: linear-gradient(#5c9bfa, #3c81f3 20%, #3a7df0);
}
.task span { overflow: hidden; }
.active { background: #1e50b8; }
.lang { display: flex; align-items: center; gap: 7px; margin-left: auto; padding-right: 11px; }
.tray {
  display: flex;
  align-items: center;
  gap: 2px;
  height: 30px;
  padding: 0 12px 0 9px;
  border-left: 1px solid #0d3f9c;
  background: linear-gradient(#35b5f5, #1495e8 15%, #119aec 80%, #0d78c4);
}
.tray span { margin-left: 7px; }

/* floating windows */
.window { position: absolute; }
.win-title { display: flex; align-items: center; justify-content: space-between; }

.options {
  left: 560px;
  top: 0;
  width: 212px;
  border: 3px solid #6275cf;
  border-top: 0;
  background: #ece9d8;
}
.options .win-title { height: 22px; padding: 0 2px 3px 4px; background: linear-gradient(#7d9ae2, #7794dd); }
.options .win-title h2 { line-height: 18px; }
.options-body { padding: 11px 5px 5px 8px; }
.options-body label { display: flex; align-items: center; height: 14px; margin: 0 0 18px 9px; }
.options-body label:nth-child(3) { margin-bottom: 7px; }
.options-body input {
  appearance: none;
  width: 12px;
  height: 12px;
  margin: 0 4px 0 0;
  border: 1px solid;
  border-color: #77756a #fff #fff #77756a;
  box-shadow: inset 1px 1px #aca899;
  background: #fff;
}
.options-actions { display: flex; gap: 8px; }
.options-actions .btn { width: 56px; }
.options-actions .btn:last-child { width: 64px; }

.btn {
  height: 24px;
  padding: 0 7px;
  border: 1px solid;
  border-color: #fff #716f64 #716f64 #fff;
  box-shadow: inset -1px -1px #aca899;
  background: #ece9d8;
}
.w72 { width: 72px; padding: 0; }
.default { width: 49px; padding: 0; border-color: #000; box-shadow: inset 1px 1px #fff, inset -1px -1px #716f64, inset -2px -2px #aca899; }

.planet {
  left: 127px;
  top: 161px;
  width: 939px;
  border: 3px solid #0f3fc4;
  border-top: 0;
  border-radius: 8px 8px 0 0;
  background: #0f3fc4;
}
.planet > .win-title {
  height: 29px;
  margin: 0 -3px;
  padding: 2px 5px 0 7px;
  border-radius: 7px 7px 0 0;
  background: linear-gradient(#0b52d8, #3c94ff 8%, #0a5ae6 22%, #0455e6 60%, #0566fb 85%, #0243c2);
}
.planet h2 { color: #fff; text-shadow: 1px 1px #0a2a80; }
.planet .cap-close { background: linear-gradient(135deg, #f09070, #cf3f1c); }
.planet-body { padding: 0 5px 1px 8px; background: #ece9d8; }

.tabs { display: flex; height: 19px; }
.tabs button { height: 18px; padding: 2px 6px 0 5px; border-right: 1px solid #716f64; color: #444; }
.tabs button:first-child { padding: 0 7px 3px 8px; height: 19px; border-right-width: 2px; }

.panel {
  padding: 0 0 31px 1px;
  border: 1px solid #fff;
  border-right: 2px solid #8d8b80;
  border-bottom: 2px solid #8d8b80;
}
.sheet { display: flex; flex-direction: column; width: 840px; }
.minimize { align-self: flex-end; }
.top, .mid { display: flex; align-items: flex-start; }
.top { margin-bottom: 9px; }
.lower { display: flex; gap: 9px; }
.left { display: flex; flex-direction: column; gap: 9px; width: 215px; }

fieldset {
  min-width: 0;
  margin: 0;
  padding: 2px 0 10px 9px;
  border: 1px solid #aaa898;
  box-shadow: 1px 1px #fff;
}
.snug { padding-bottom: 2px; }
legend { height: 14px; padding: 0 3px; line-height: 12px; }

.fields { display: grid; grid-auto-rows: 20px; row-gap: 4px; }
.fields.tall { row-gap: 12px; }
.fields label, .two { display: flex; align-items: flex-start; white-space: nowrap; }
.fields label > span { flex: none; width: var(--label); }
.fields em { font-style: normal; margin-left: 1px; }
.fields input, .notes input {
  flex: none;
  width: 56px;
  height: 19px;
  margin-top: 1px;
  padding: 1px 0 0 9px;
  border: 2px solid;
  border-width: 2px 1px 1px 2px;
  border-color: #7c7a70 #fff #fff #7c7a70;
  border-radius: 0;
  background: #fff;
}
.fields input:disabled { background: #c0ffff; color: #a09e94; }
.fields .i22 { width: 23px; }
.fields .i28 { width: 28px; }
.fields .i31 { width: 31px; }
.fields .i34 { width: 34px; }
.fields .i37 { width: 38px; }
.fields .i40 { width: 41px; }
.fields .i46 { width: 46px; }
.fields .i71 { width: 72px; }
.l64 { --label: 64px; }
.l73 { --label: 73px; }
.l80 { --label: 80px; }
.l97 { --label: 97px; }
.l104 { --label: 104px; }
.l113 { --label: 113px; }
.l128 { --label: 128px; }
.l136 { --label: 136px; }
.l160 { --label: 160px; }
.l200 { --label: 200px; }
.indent label > span { padding-left: 24px; }

.params { display: flex; gap: 17px; width: 383px; margin-right: 9px; padding-left: 16px; }
.params > legend { margin-left: -7px; }
.confirm { display: flex; align-items: center; white-space: nowrap; }
.params .confirm { gap: 10px; margin-top: 17px; height: 24px; }

.teeth { width: 295px; margin-right: 1px; padding-left: 8px; }
.teeth > legend { margin-left: 1px; }
.teeth-cols { display: flex; gap: 7px; }
.teeth-cols > .fields { padding-top: 16px; }
.ratio { display: flex; flex-direction: column; gap: 2px; }
.ratio-head { padding-left: 9px; }
.teeth-confirm { gap: 53px; height: 24px; margin: 5px 0 11px; padding-left: 48px; }

.width-set { width: 151px; }
.width-set > legend { margin-left: 1px; }
.play { padding-bottom: 6px; }
.play .btn { display: block; width: 56px; margin: 4px 0 0 128px; }
.focused { outline: 1px dotted #222; outline-offset: -5px; }

.notes {
  display: grid;
  grid-template-columns: 79px 1fr;
  column-gap: 9px;
  row-gap: 12px;
  padding-left: 8px;
  white-space: pre;
}
.notes label { display: flex; flex-direction: column; gap: 2px; }
.notes input { width: 100%; }
.notes .project { grid-column: 1 / 3; width: 128px; }

.right { flex: 1; }
.shift { display: flex; flex-direction: column; gap: 1px; width: 239px; margin-right: 9px; }
.keep { width: 215px; margin-right: 1px; }
.misc-col { width: 152px; }
.misc { width: 151px; padding: 2px 0 50px 1px; }
.misc > legend { margin-left: 9px; }
.misc label { color: #0000b8; }
.misc input { color: #000; }
.pairs { display: grid; grid-template-columns: 72px 72px; row-gap: 8px; margin: 9px 0 0 8px; }
.pairs .btn { padding: 0; }

.bottom { display: flex; gap: 10px; }
.dims { display: flex; flex-direction: column; gap: 9px; width: 534px; }
.limit { width: 295px; }
.triple { display: flex; }
.triple span:nth-child(-n+2) { width: 176px; }
.dim-cols { display: grid; grid-template-columns: repeat(3, 160px); column-gap: 16px; }
.two > label { width: 64px; }
.actions { display: flex; flex-direction: column; align-items: flex-start; gap: 8px; width: 72px; padding-top: 8px; }
```
